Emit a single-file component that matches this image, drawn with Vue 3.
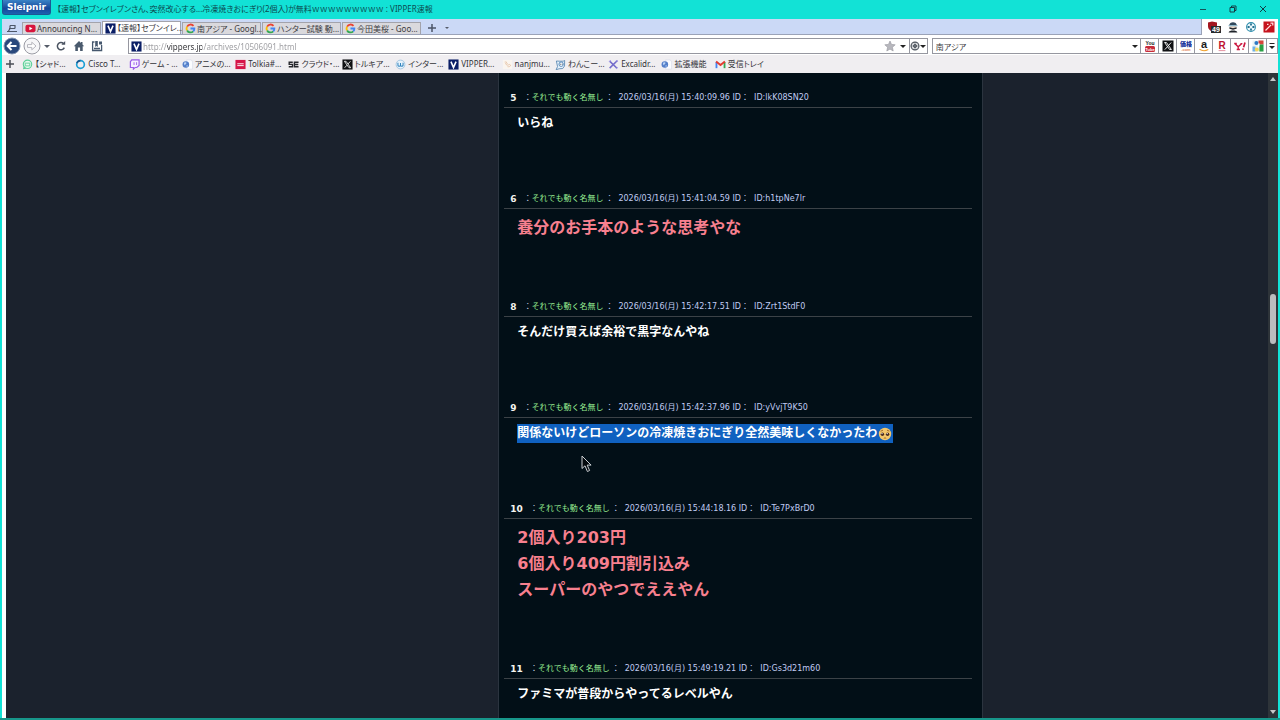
<script setup>
import { ref } from 'vue'

const tabs = [
  { icon: 'youtube', label: 'Announcing N...' },
  { icon: 'vipper', label: '【速報】セブンイレ...', active: true },
  { icon: 'google', label: '南アジア - Googl...' },
  { icon: 'google', label: 'ハンター試験 動...' },
  { icon: 'google', label: '今田美桜 - Goo...' }
]

const bookmarks = [
  { icon: 'chat', label: '【シャド...' },
  { icon: 'cisco', label: 'Cisco T...' },
  { icon: 'twitch', label: 'ゲーム - ...' },
  { icon: 'globe', label: 'アニメの...' },
  { icon: 'tolkia', label: 'Tolkia#...' },
  { icon: 'se', label: 'クラウド・...' },
  { icon: 'x', label: 'トルキア...' },
  { icon: 'wave', label: 'インター...' },
  { icon: 'vipper', label: 'VIPPER...' },
  { icon: 'faint', label: 'nanjmu...' },
  { icon: 'wanko', label: 'わんこー...' },
  { icon: 'excali', label: 'Excalidr...' },
  { icon: 'globe', label: '拡張機能' },
  { icon: 'gmail', label: '受信トレイ' }
]

const engines = [
  { icon: 'yt', label: 'YouTube' },
  { icon: 'x', label: 'X' },
  { icon: 'kakaku', label: '価格.com' },
  { icon: 'amazon', label: 'Amazon' },
  { icon: 'rakuten', label: '楽天' },
  { icon: 'yahoo', label: 'Yahoo!' },
  { icon: 'oldgoogle', label: 'Google' }
]

const posts = [
  { no: 5, time: '15:40:09.96', id: 'lkK08SN20', lines: ['いらね'] },
  { no: 6, time: '15:41:04.59', id: 'h1tpNe7lr', lines: ['養分のお手本のような思考やな'], big: true },
  { no: 8, time: '15:42:17.51', id: 'Zrt1StdF0', lines: ['そんだけ買えば余裕で黒字なんやね'] },
  { no: 9, time: '15:42:37.96', id: 'yVvjT9K50', lines: ['関係ないけどローソンの冷凍焼きおにぎり全然美味しくなかったわ'], selected: true },
  { no: 10, time: '15:44:18.16', id: 'Te7PxBrD0', lines: ['2個入り203円', '6個入り409円割引込み', 'スーパーのやつでええやん'], big: true },
  { no: 11, time: '15:49:19.21', id: 'Gs3d21m60', lines: ['ファミマが普段からやってるレベルやん'] }
]

const url = ref('http://vippers.jp/archives/10506091.html')
const query = ref('南アジア')
</script>

<template>
  <div class="window">
    <svg class="defs" aria-hidden="true">
      <symbol id="i-youtube" viewBox="0 0 12 12"><rect x="0.5" y="2" width="11" height="8" rx="2" fill="#d8143c" /><path d="M4.8 4v4l3.4-2z" fill="#fff" /></symbol>
      <symbol id="i-vipper" viewBox="0 0 12 12"><rect x="0.5" y="0.5" width="11" height="11" fill="#0b1f66" /><path d="M3.2 2.8 6 9.2l2.8-6.4" fill="none" stroke="#fff" stroke-width="1.7" /></symbol>
      <symbol id="i-google" viewBox="0 0 12 12"><g fill="none" stroke-width="2"><path d="M9.3 3.1A4.3 4.3 0 0 0 2.3 3.9" stroke="#ea4335" /><path d="M2.3 3.9a4.3 4.3 0 0 0 0 4.2" stroke="#fbbc05" /><path d="M2.3 8.1a4.3 4.3 0 0 0 6.7 1" stroke="#34a853" /><path d="M9 9.1A4.2 4.2 0 0 0 10.2 6H6" stroke="#4285f4" /></g></symbol>
      <symbol id="i-chat" viewBox="0 0 12 12"><circle cx="6" cy="5.8" r="4.6" fill="#e6faef" stroke="#5ccf98" stroke-width="1.2" /><path d="M1 11.2 2 7.5l2.6 3z" fill="#5ccf98" /><path d="M3.5 4.5h5v3h-5z" fill="none" stroke="#5ccf98" /></symbol>
      <symbol id="i-cisco" viewBox="0 0 12 12"><circle cx="6" cy="6" r="4.2" fill="none" stroke="#1c9fd4" stroke-width="1.8" /><path d="M2 4.5A4.3 4.3 0 0 1 6 1.8" fill="none" stroke="#1a5a92" stroke-width="1.8" /></symbol>
      <symbol id="i-twitch" viewBox="0 0 12 12"><path d="M3 1h8v6L8.5 9.3H6.6L4.8 11V9.3H1.5V3z" fill="#f6f0ff" stroke="#9a5be8" stroke-width="1.3" /><path d="M5.5 3.5v3M8.3 3.5v3" stroke="#9a5be8" /></symbol>
      <symbol id="i-globe" viewBox="0 0 12 12"><path d="M5 1h5l1.5 2v8H5z" fill="#fbfcff" stroke="#d3dbe9" stroke-width=".6" /><circle cx="4.2" cy="6" r="3.6" fill="#547fc9" /><path d="M2 4.2c1.4-1.2 3-.8 2.8.4S3 6 2.6 7z" fill="#b9d3f6" /><circle cx="5.6" cy="7.5" r="1" fill="#8db0e5" /></symbol>
      <symbol id="i-tolkia" viewBox="0 0 12 12"><rect x="0.5" y="1" width="11" height="10" fill="#d61749" /><path d="M2.5 5.2h7M2.5 7.2h7" stroke="#fff" stroke-width="1" /></symbol>
      <symbol id="i-se" viewBox="0 0 12 12"><path d="M5.2 3.6H1.3v2.3h3.6v2.5H.8M11.5 3.6H7v4.8h4.5M7.2 6h4" fill="none" stroke="#26262c" stroke-width="1.5" /></symbol>
      <symbol id="i-x" viewBox="0 0 12 12"><rect x=".5" y=".5" width="11" height="11" fill="#101114" /><path d="M2.6 2.5h1.8l5 7H7.6z" fill="none" stroke="#fff" stroke-width=".9" /><path d="M9.2 2.5 6.6 5.4M5.4 6.8 2.8 9.6" stroke="#fff" stroke-width=".9" /></symbol>
      <symbol id="i-wave" viewBox="0 0 12 12"><circle cx="6" cy="6" r="4.8" fill="#e7f3fc" stroke="#8fb9d9" stroke-width=".8" /><path d="M3.2 4v3q.1 1 1.4 1T6 7V4.4V7q.1 1 1.4 1t1.4-1V4" fill="none" stroke="#3183bd" stroke-width="1.1" /></symbol>
      <symbol id="i-faint" viewBox="0 0 12 12"><rect x="1" y="1" width="10" height="10" fill="#faf5ef" /><path d="M3 3.5c1 0 .8 3 2.6 3.2S8 5.2 9 6.4 8 8.8 6 8.4M4 2.5l2 3" fill="none" stroke="#e4bfa0" stroke-width=".9" /></symbol>
      <symbol id="i-wanko" viewBox="0 0 12 12"><path d="m1.5 2.2 3 .2h4.4l1.6-.8-.1 6-2 2.8-4 .3-3.2 1 1.6-3.4z" fill="#e7f2fc" stroke="#5081ae" stroke-width=".9" /><circle cx="6.7" cy="5.7" r="2.4" fill="#fff" stroke="#4a82b8" /><path d="M5.8 5.2v1M7.8 5.2v1" stroke="#24384f" /></symbol>
      <symbol id="i-excali" viewBox="0 0 12 12"><path d="m1.8 2.3 8 7.8M10.3 1.6 1.8 10" fill="none" stroke="#746ccb" stroke-width="1.7" /><path d="M1 3.2 3 1.4M8.8 10.8l1.8-1.7M8.7 1.5l2.1 1.4" stroke="#a49be6" stroke-width="1.1" /></symbol>
      <symbol id="i-gmail" viewBox="0 0 12 12"><path d="M1.6 10V3.2" stroke="#4285f4" stroke-width="2" /><path d="M10.4 10V3.2" stroke="#34a853" stroke-width="2" /><path d="M1.2 2.8 6 6.6l4.8-3.8" fill="none" stroke="#e33c30" stroke-width="2.1" /></symbol>
      <symbol id="i-yahoo" viewBox="0 0 12 12"><path d="m.8 3.6 3.4 3.2L7.6 3.8M4.2 6.6v3M2.7 9.5h3.2M.2 3.5h2.6M6.4 3.6h2" fill="none" stroke="#cb1840" stroke-width="1.4" /><path d="m11 2.6-1.4 4.6M9 8.6v1.2" stroke="#cb1840" stroke-width="1.7" /></symbol>
      <symbol id="i-oldgoogle" viewBox="0 0 12 12"><rect x=".5" y=".5" width="11" height="11" fill="#eaf3f5" /><path d="M6.5.5h5v4h-5z" fill="#d84539" /><path d="M7.4 4.5h4.1v7H7.4z" fill="#28a044" /><path d="M.5 6.5h3v5h-3z" fill="#6fb0e6" /><circle cx="4.4" cy="3" r="2" fill="#2c7ac4" /><circle cx="4.8" cy="9.4" r="2" fill="#f3d45a" /><path d="m7 3.4-.6 3.4" stroke="#fff" stroke-width="1.4" /></symbol>
    </svg>

    <header class="titlebar">
      <button class="brand" type="button">Sleipnir</button>
      <h1 class="title">【速報】セブンイレブンさん、突然改心する...冷凍焼きおにぎり(2個入)が無料ｗｗｗｗｗｗｗｗｗ : VIPPER速報</h1>
      <div class="controls">
        <button type="button" aria-label="最小化"><svg viewBox="0 0 10 10"><path d="M2 5.5h6" stroke="#12545a" /></svg></button>
        <button type="button" aria-label="元に戻す"><svg viewBox="0 0 10 10"><path d="M2 3.5h4.5V8H2zM3.5 3.5V2H8v4.5H6.5" fill="none" stroke="#123c44" /></svg></button>
        <button type="button" aria-label="閉じる"><svg viewBox="0 0 10 10"><path d="m2 2 6 6M8 2 2 8" stroke="#123c44" /></svg></button>
      </div>
    </header>

    <div class="frame">
      <div class="tabrow">
        <nav class="tabstrip" aria-label="タブ">
          <button class="tablist" type="button" aria-label="タブ一覧"><svg viewBox="0 0 12 12"><path d="M4 3.5h5v3M3 6.5h6M1 9.5h10M4 3.5v3L2.500 9" fill="none" stroke="#4d5668" stroke-width="1.2" /></svg></button>
          <button v-for="tab in tabs" :key="tab.label" type="button" class="tab" :class="{ active: tab.active }">
            <svg class="ico"><use :href="'#i-' + tab.icon" /></svg><span>{{ tab.label }}</span>
          </button>
          <button class="newtab" type="button" aria-label="新しいタブ"><svg viewBox="0 0 12 12"><path d="M6 2v8M2 6h8" stroke="#4d5668" stroke-width="1.5" /></svg></button>
          <button class="tabmenu" type="button" aria-label="タブメニュー"><i class="caret small"></i></button>
        </nav>
        <div class="extensions">
          <button type="button" aria-label="ブロッカー"><svg class="wide" viewBox="0 0 14 12"><path d="M1 1.6 5 .6l5 1v4C10 8 7 9.600 5 10.600 3 9.600 1 8 1 5.600z" fill="#a3151f" /><rect x="4" y="5" width="10" height="7" fill="#2a2b2d" /><text x="9" y="11" font-size="7" font-weight="700" text-anchor="middle" fill="#fff">49</text></svg></button>
          <button type="button" aria-label="エージェント"><svg viewBox="0 0 12 12"><path d="M2.2 4.6C2.2 0 9.8 0 9.8 4.6z" fill="#31485b" /><path d="M2.6 4.2h6.8v3L6 9 2.6 7.2z" fill="#e9d6c6" /><path d="M1.6 4h8.8v1.3H1.6z" fill="#8fb7c9" /><path d="M2.4 6.2 6 7.2l3.6-1v1.6L6 8.8 2.4 7.800zM1.6 11.5c.4-2.6 8.4-2.6 8.8 0z" fill="#20242b" /></svg></button>
          <button type="button" aria-label="ターゲット"><svg viewBox="0 0 12 12"><circle cx="6" cy="6" r="4.4" fill="#ebf7fb" stroke="#2e8eac" stroke-width="1.1" /><path d="M6 2.600v2M6 7.400v2M2.600 6h2M7.400 6h2" stroke="#236f8e" stroke-width="1.800" /></svg></button>
          <button type="button" aria-label="ワンド"><svg viewBox="0 0 12 12"><rect x=".5" y=".5" width="11" height="11" fill="#c5131d" /><path d="m2.5 9.5 5.6-5.6M4 3.4h1.5M7.5 2.2h2.3v2.3" fill="none" stroke="#ffdede" stroke-width="1.3" /></svg></button>
        </div>
      </div>

      <div class="toolbar">
        <div class="navs">
          <button class="round back" type="button" aria-label="戻る"><svg viewBox="0 0 18 18"><circle cx="9" cy="9" r="8" fill="#29487c" stroke="#8495b2" /><path d="M13.5 9H5M8.5 5 4.7 9l3.8 4" fill="none" stroke="#fff" stroke-width="2" /></svg></button>
          <button class="round" type="button" aria-label="進む"><svg viewBox="0 0 18 18"><circle cx="9" cy="9" r="8" fill="#f6f6f8" stroke="#9a9ba4" /><path d="M4.5 7.6h4.3V5.2L13 9l-4.2 3.8v-2.4H4.5z" fill="#fff" stroke="#b5b5bd" /></svg></button>
          <button class="hist" type="button" aria-label="履歴"><i class="caret"></i></button>
          <button class="tool" type="button" aria-label="更新"><svg viewBox="0 0 12 12"><path d="M9.3 7.6A3.6 3.6 0 1 1 8.5 3.6" fill="none" stroke="#4a5361" stroke-width="1.5" /><path d="M6.4 4.8h3.8V1z" fill="#4a5361" /></svg></button>
          <button class="tool" type="button" aria-label="ホーム"><svg viewBox="0 0 12 12"><path d="M6 1 .8 6.2h1.5V11h2.6V7.5h2.2V11h2.6V6.2h1.5L9.5 4.4V2H8v1z" fill="#4a5a6d" /></svg></button>
          <button class="tool" type="button" aria-label="ブックマーク"><svg viewBox="0 0 12 12"><path d="M3.5 2H1.6v8.5h9V5M3 8.5h6" fill="none" stroke="#46586e" stroke-width="1.3" /><path d="M4.2 1h2.600v6L5.500 6 4.200 7zM8 1.500h3v3H8z" fill="#46586e" /></svg></button>
        </div>
        <div class="field address">
          <svg class="ico"><use href="#i-vipper" /></svg>
          <input v-model="url" class="url" type="text" aria-label="アドレス" spellcheck="false">
          <button class="star" type="button" aria-label="お気に入り"><svg viewBox="0 0 12 12"><path d="m6 1 1.5 3.4 3.7.4-2.8 2.5.8 3.7L6 9.1 2.8 11l.8-3.7L.8 4.8l3.7-.4z" fill="#b7b7bd" stroke="#94949c" stroke-width=".6" /></svg></button>
          <button class="drop" type="button" aria-label="アドレス一覧"><i class="caret dark"></i></button>
          <button class="engine" type="button" aria-label="エンジン切替"><svg viewBox="0 0 12 12"><circle cx="6" cy="6" r="4.7" fill="#dfe1e4" stroke="#545b63" stroke-width="1.4" /><circle cx="6" cy="6" r="1.8" fill="#787f87" stroke="#343a42" /><path d="M6 1v2M6 9v2M1 6h2M9 6h2" stroke="#555c64" /></svg><i class="caret dark"></i></button>
        </div>
        <div class="field search">
          <input v-model="query" type="text" aria-label="検索" spellcheck="false">
          <button class="drop" type="button" aria-label="検索履歴"><i class="caret dark"></i></button>
          <button v-for="engine in engines" :key="engine.icon" class="cell" type="button" :aria-label="engine.label">
            <svg v-if="engine.icon === 'yt'" viewBox="0 0 12 12"><text x="6" y="5" font-size="5" font-weight="700" text-anchor="middle" fill="#222">You</text><rect x="1" y="6" width="10" height="6" rx="1.5" fill="#c82c39" /><text x="6" y="11" font-size="4" font-weight="700" text-anchor="middle" fill="#fff">Tube</text></svg>
            <svg v-else-if="engine.icon === 'kakaku'" viewBox="0 0 12 12"><text x="6" y="6" font-size="6" font-weight="900" text-anchor="middle" fill="#17329b">価格</text><text x="6" y="11" font-size="4" font-weight="700" text-anchor="middle" fill="#e18358">.com</text></svg>
            <svg v-else-if="engine.icon === 'amazon'" viewBox="0 0 12 12"><text x="6" y="8" font-size="11" font-weight="700" text-anchor="middle" fill="#1c1c1c">a</text><path d="M1.500 9.300q4.300 2.700 8.800.2" fill="none" stroke="#f0a02c" stroke-width="1.100" /></svg>
            <svg v-else-if="engine.icon === 'rakuten'" viewBox="0 0 12 12"><text x="6" y="9" font-size="10" font-weight="700" text-anchor="middle" fill="#bd1230">R</text><path d="M2.600 10.600h6.800" stroke="#d8637a" stroke-width=".7" /></svg>
            <svg v-else><use :href="'#i-' + engine.icon" /></svg>
          </button>
          <button class="overflow" type="button" aria-label="その他"><svg viewBox="0 0 8 10"><path d="M1.5 2.5h5" stroke="#222" /><path d="M1 5h6L4 8z" fill="#222" /></svg></button>
        </div>
      </div>

      <nav class="bookbar" aria-label="お気に入りバー">
        <button class="add" type="button" aria-label="追加"><svg viewBox="0 0 12 12"><path d="M6 2v8M2 6h8" stroke="#4a4d55" stroke-width="1.5" /></svg></button>
        <div class="bookmarks">
          <a v-for="mark in bookmarks" :key="mark.label" href="#"><svg class="ico"><use :href="'#i-' + mark.icon" /></svg><span>{{ mark.label }}</span></a>
        </div>
      </nav>

      <div class="viewport">
        <main class="page">
          <section class="thread">
            <article v-for="post in posts" :key="post.no" class="post">
              <header class="meta">
                <b>{{ post.no }}</b><span class="name"><i>：</i>それでも動く名無し</span><span class="sep">：</span><span class="date">2026/03/16(月) {{ post.time }} ID： &nbsp;ID:{{ post.id }}</span>
              </header>
              <div class="body" :class="{ big: post.big }">
                <p v-for="line in post.lines" :key="line">
                  <span v-if="post.selected" class="marked">{{ line }}<svg class="emoji" viewBox="0 0 14 14" role="img" aria-label="泣きそうな顔"><circle cx="7" cy="7" r="6.2" fill="#f3c66a" /><circle cx="4.4" cy="7.3" r="1.7" fill="#4b2b1e" /><circle cx="9.6" cy="7.3" r="1.7" fill="#4b2b1e" /><circle cx="4" cy="6.6" r=".7" fill="#fff" /><circle cx="9.2" cy="6.6" r=".7" fill="#fff" /><path d="M2.6 4.2 5 3.2M9 3.2l2.4 1M5.8 11.3q1.2-.9 2.4 0" fill="none" stroke="#8c531c" stroke-width=".8" /></svg></span>
                  <template v-else>{{ line }}</template>
                </p>
                <svg v-if="post.selected" class="cursor" viewBox="0 0 12 18" aria-hidden="true"><path d="M1 1v12.5l3-2.7 2.4 5.7 2.2-1-2.4-5.4h3.9z" fill="#04090d" stroke="#c9cdd2" stroke-width="1" /></svg>
              </div>
            </article>
          </section>
        </main>
        <div class="scrollbar" aria-hidden="true">
          <i class="arrow up"></i>
          <div class="track"><div class="before"></div><div class="thumb"></div><div class="after"></div></div>
          <i class="arrow down"></i>
        </div>
      </div>
    </div>
  </div>
</template>

<style>
html,
body {
  margin: 0;
  background: #12e2d6;
}
</style>

<style scoped>
.window {
  display: flex;
  flex-direction: column;
  height: 100vh;
  overflow: hidden;
  box-sizing: border-box;
  border-bottom: 2px solid #17968a;
  background: #12e2d6;
  color: #333;
  font-family: "Noto Sans", "Noto Sans CJK JP", sans-serif;
  font-size: 8px;
  line-height: 12px;
}
.window *,
.window *::before {
  box-sizing: border-box;
}
.defs {
  position: absolute;
  width: 0;
  height: 0;
}
svg text {
  font-family: "Liberation Sans", "Noto Sans CJK JP", sans-serif;
}
button {
  display: flex;
  align-items: center;
  justify-content: center;
  flex: none;
  margin: 0;
  padding: 0;
  border: 0;
  background: none;
  color: inherit;
  font: inherit;
}
svg {
  display: block;
  flex: none;
  width: 12px;
  height: 12px;
}
.ico {
  width: 11px;
  height: 11px;
}
.caret {
  border: 3px solid transparent;
  border-top-color: #555b68;
  border-bottom: 0;
}
.caret.dark {
  border-top-color: #222;
}
.caret.small {
  border-width: 2px 2px 0;
}

.titlebar {
  display: flex;
  flex: none;
  height: 19px;
  padding: 0 2px;
  align-items: flex-start;
}
.brand {
  width: 49px;
  height: 15px;
  border: 1px solid #1c5794;
  border-top: 0;
  border-radius: 0 0 3px 3px;
  background: linear-gradient(#3b83c6, #16489a 60%, #1c62b0);
  color: #fff;
  font: bold 9px/14px "DejaVu Sans", sans-serif;
}
.title {
  flex: 1;
  margin: 0;
  padding-left: 6px;
  overflow: hidden;
  white-space: nowrap;
  color: #0c4a50;
  font-size: 8px;
  font-weight: 400;
  line-height: 18px;
  font-feature-settings: "palt";
}
.controls {
  display: flex;
}
.controls button {
  width: 30px;
  height: 17px;
}
.controls svg {
  width: 10px;
  height: 10px;
}

.frame {
  display: flex;
  flex: 1;
  flex-direction: column;
  min-height: 0;
  margin: 0 2px;
  background: #fff;
}
.tabrow {
  display: flex;
  flex: none;
  height: 16px;
}
.tabstrip {
  display: flex;
  flex: 1;
  align-items: flex-end;
  gap: 1px;
  border-right: 1px solid #9ba3b8;
  border-bottom: 1px solid #9ba3b8;
  background: #cbd9f6;
}
.tablist {
  width: 19px;
  height: 13px;
}
.tab {
  width: 79px;
  height: 12px;
  padding-left: 2px;
  justify-content: flex-start;
  gap: 1px;
  border: 1px solid #a3a3ab;
  border-bottom: 0;
  background: #dad9dd;
  color: #3a3a40;
}
.tab.active {
  height: 13px;
  background: #fff;
}
.tab span,
.bookmarks span {
  white-space: nowrap;
  font-feature-settings: "palt";
}
.newtab {
  width: 20px;
  height: 12px;
}
.tabmenu {
  width: 8px;
  height: 12px;
}
.extensions {
  display: flex;
  align-items: center;
  gap: 6px;
  padding: 0 3px 0 5px;
}
.extensions .wide {
  width: 14px;
}

.toolbar {
  display: flex;
  flex: none;
  align-items: center;
  height: 20px;
  padding-top: 2px;
  gap: 4px;
}
.navs {
  display: flex;
  flex: none;
  align-items: center;
  width: 122px;
}
.round {
  width: 20px;
}
.round svg {
  width: 18px;
  height: 18px;
}
.hist {
  width: 10px;
  height: 16px;
}
.tool {
  width: 18px;
  height: 16px;
}
.field {
  display: flex;
  align-items: center;
  height: 16px;
  border: 1px solid #9697a0;
  background: #fff;
}
.address {
  flex: 800;
  padding-left: 2px;
}
.search {
  flex: 346;
}
.field input {
  flex: 1;
  min-width: 0;
  height: 14px;
  margin: 0;
  padding: 0 3px;
  border: 0;
  outline: 0;
  background: transparent;
  color: #3c3c40;
  font: inherit;
  font-feature-settings: "palt";
}
.field input.url {
  padding: 0 1px;
  background: linear-gradient(90deg, #9a9a9e 25px, #303034 25px, #303034 60px, #9a9a9e 60px);
  background-clip: text;
  -webkit-text-fill-color: transparent;
}
.star {
  width: 16px;
}
.drop {
  width: 11px;
  height: 14px;
}
.engine {
  width: 18px;
  height: 14px;
  border-left: 1px solid #9697a0;
}
.engine svg {
  width: 10px;
  height: 10px;
}
.cell {
  width: 18px;
  height: 14px;
  border-left: 1px solid #9697a0;
}
.overflow {
  width: 11px;
  height: 14px;
  border-left: 1px solid #9697a0;
}
.overflow svg {
  width: 8px;
  height: 10px;
}

.bookbar {
  display: flex;
  flex: none;
  align-items: center;
  height: 18px;
  background: #f0eef1;
}
.add {
  width: 16px;
  height: 16px;
}
.bookmarks {
  display: grid;
  grid-template-columns: repeat(14, 1fr);
  width: 746px;
  margin-left: 4px;
}
.bookmarks a {
  display: flex;
  align-items: center;
  gap: 2px;
  min-width: 0;
  color: #333338;
  text-decoration: none;
}

.viewport {
  display: flex;
  flex: 1;
  min-height: 0;
  padding-left: 4px;
}
.page {
  display: grid;
  flex: 1;
  grid-template-columns: 493fr 485px 285fr;
  overflow: hidden;
  background: #1b222d;
}
.thread {
  grid-column: 2;
  padding: 15px 10px 0 5px;
  border: 1px solid #2b343f;
  border-width: 0 1px;
  background: #020f17;
}
.post {
  padding-bottom: 56px;
  font-family: "DejaVu Sans", "Noto Sans CJK JP", sans-serif;
}
.meta {
  display: flex;
  align-items: center;
  height: 20px;
  padding: 1px 0 0 6px;
  border-bottom: 1px solid #3c4247;
  color: #c0cbf2;
  white-space: pre;
}
.meta b {
  color: #f4f4f0;
  font-size: 9px;
}
.name {
  margin-left: 7px;
  color: #98ee92;
}
.name i {
  color: #c4cfe0;
  font-style: normal;
}
.sep {
  margin: 0 5px 0 2px;
}
.body {
  position: relative;
  padding: 6px 0 0 13px;
  color: #fff;
  font-size: 12px;
  font-weight: 700;
  line-height: 19px;
}
.body.big {
  color: #f8808f;
  font-size: 16px;
  line-height: 26px;
}
.body p {
  margin: 0;
}
.marked {
  display: inline-flex;
  align-items: center;
  background: #1061c0;
  vertical-align: top;
}
.emoji {
  width: 14px;
  height: 14px;
  margin: 0 1px;
}
.cursor {
  position: absolute;
  left: 77px;
  top: 37px;
  width: 12px;
  height: 18px;
}

.scrollbar {
  display: flex;
  flex: none;
  flex-direction: column;
  align-items: center;
  width: 10px;
  padding: 4px 0;
  background: #2e3439;
}
.arrow {
  flex: none;
  border: 3px solid transparent;
}
.arrow.up {
  border-top: 0;
  border-bottom: 4px solid #c5c7c9;
}
.arrow.down {
  border-bottom: 0;
  border-top: 4px solid #c5c7c9;
}
.track {
  display: flex;
  flex: 1;
  flex-direction: column;
}
.before {
  flex: 213;
}
.thumb {
  flex: 50;
  width: 6px;
  border-radius: 3px;
  background: #bbbcbe;
}
.after {
  flex: 366;
}
</style>
